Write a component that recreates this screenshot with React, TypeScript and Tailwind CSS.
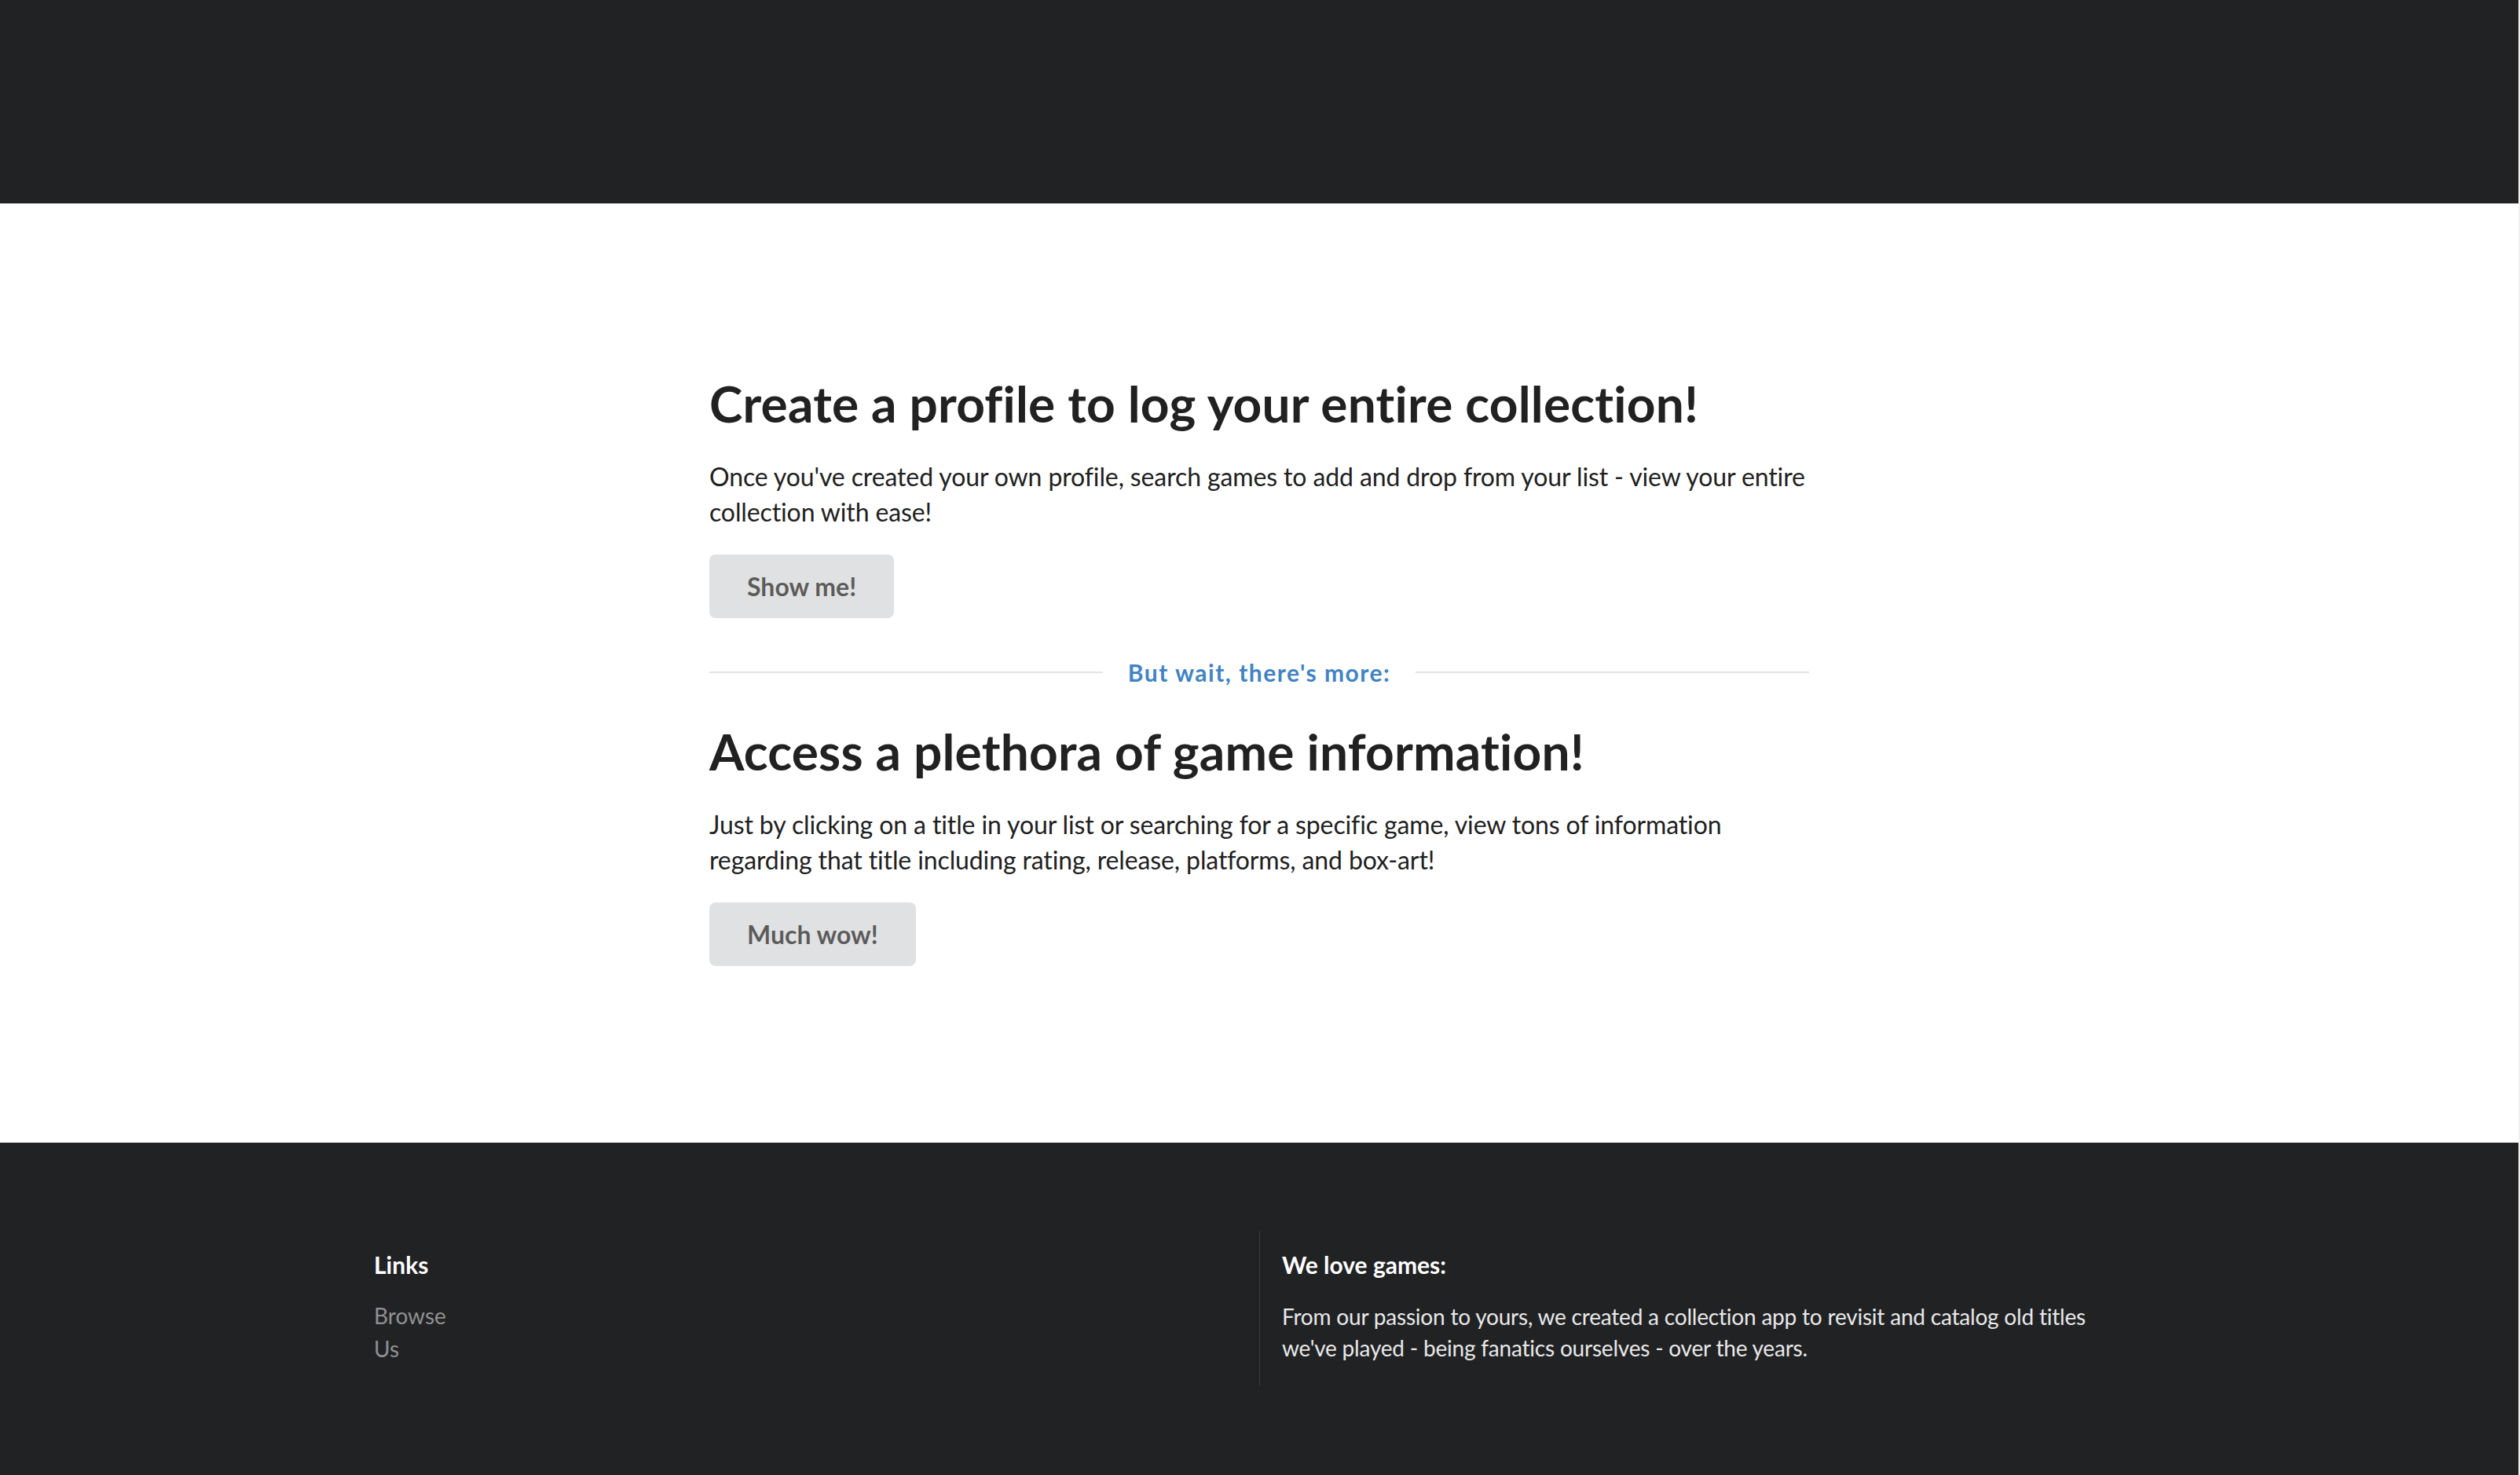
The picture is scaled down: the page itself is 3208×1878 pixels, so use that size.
import React from "react";

const FEATURES = [
  {
    title: "Create a profile to log your entire collection!",
    body: "Once you've created your own profile, search games to add and drop from your list - view your entire collection with ease!",
    cta: "Show me!",
  },
  {
    title: "Access a plethora of game information!",
    body: "Just by clicking on a title in your list or searching for a specific game, view tons of information regarding that title including rating, release, platforms, and box-art!",
    cta: "Much wow!",
  },
];

function Feature({ title, body, cta }: { title: string; body: string; cta: string }) {
  return (
    <div>
      <h3 className="text-[64px] leading-[82px] font-bold tracking-[0.2px] text-[#212121]">{title}</h3>
      <p className="mt-[29px] text-[32px] leading-[45px] tracking-[-0.12px] text-[#212121]">{body}</p>
      <a
        href="#"
        className="mt-[32px] inline-flex h-[81px] items-center rounded-[8px] bg-[#e0e1e2] px-[48px] text-[32px] font-bold text-black/60"
      >
        {cta}
      </a>
    </div>
  );
}

export default function App() {
  return (
    <div className="min-h-screen border-r-2 border-[#f1f1f1] bg-white font-['Lato',sans-serif]">
      {/* top bar */}
      <div className="h-[259px] bg-[#212224]" />

      <section className="border-b border-[#dcdcdc] pt-[214px] pb-[224px]">
        <div className="mx-auto w-[1400px]">
          <Feature {...FEATURES[0]} />

          <div className="mt-[49px] mb-[40px] flex h-[40px] items-center gap-[32px]">
            <div className="h-[2px] flex-1 bg-[#e4e4e4]" />
            <a href="#" className="text-[30px] leading-[40px] font-bold tracking-[0.05em] text-[#4183c4]">
              But wait, there's more:
            </a>
            <div className="h-[2px] flex-1 bg-[#e4e4e4]" />
          </div>

          <Feature {...FEATURES[1]} />
        </div>
      </section>

      <footer className="bg-[#212224] pt-[112px] pb-[114px]">
        <div className="mx-auto grid w-[2310px] grid-cols-2">
          <div className="px-[28px] pt-[24px] pb-[27px]">
            <h4 className="text-[30px] leading-[38px] font-bold text-white">Links</h4>
            <ul className="mt-[25px] text-[28px] leading-[42px] text-white/50">
              <li>
                <a href="#">Browse</a>
              </li>
              <li>
                <a href="#">Us</a>
              </li>
            </ul>
          </div>
          <div className="border-l border-white/10 px-[28px] pt-[24px] pb-[27px]">
            <h4 className="text-[30px] leading-[38px] font-bold text-white">We love games:</h4>
            <p className="mt-[27px] text-[28px] leading-[40px] tracking-[-0.2px] text-white/90">
              From our passion to yours, we created a collection app to revisit and catalog old titles we've played - being
              fanatics ourselves - over the years.
            </p>
          </div>
        </div>
      </footer>
    </div>
  );
}
